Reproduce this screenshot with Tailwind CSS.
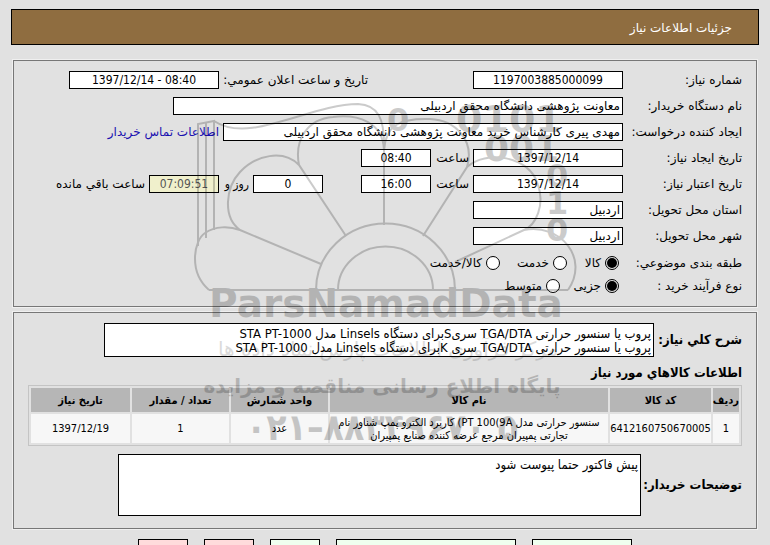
<!DOCTYPE html>
<html lang="fa" dir="rtl">
<head>
    <meta charset="UTF-8">
    <meta name="viewport" content="width=device-width, initial-scale=1.0">
    <title>جزئیات اطلاعات نیاز</title>
    <script src="https://cdn.jsdelivr.net/npm/@tailwindcss/browser@4"></script>
</head>
<body class="relative bg-[#e1e1e1] text-black text-xs font-['DejaVu_Sans',sans-serif]">
    <div class="px-[11px] pt-[9px]">
        <h1 class="h-9 border border-black bg-[#8f6d40] px-[26px] leading-[36px] text-white">جزئیات اطلاعات نیاز</h1>

        <!-- Request details -->
        <section class="mx-0.5 mt-[15px] border border-[#777] px-[14px] pt-[10px] pb-[11px] outline outline-[#f0f0f0]">
            <div class="flex flex-col gap-2">
                <div class="flex h-[18px] items-center">
                    <label for="number" class="w-[119px]">شماره نیاز:</label>
                    <input id="number" value="1197003885000099" dir="ltr" class="h-[18px] w-[150px] border border-black bg-white text-center font-['DejaVu_Sans_Condensed',sans-serif]">
                    <label for="announced" class="ms-[105px] w-[149px] whitespace-nowrap">تاریخ و ساعت اعلان عمومي:</label>
                    <input id="announced" value="1397/12/14 - 08:40" dir="ltr" class="h-[18px] w-[150px] border border-black bg-white text-center font-['DejaVu_Sans_Condensed',sans-serif]">
                </div>
                <div class="flex h-[18px] items-center">
                    <label for="buyer" class="w-[119px]">نام دستگاه خریدار:</label>
                    <input id="buyer" value="معاونت پژوهشی دانشگاه محقق اردبیلی" class="h-[18px] w-[450px] border border-black bg-white px-0.5">
                </div>
                <div class="flex h-[18px] items-center">
                    <label for="creator" class="w-[119px] whitespace-nowrap">ایجاد کننده درخواست:</label>
                    <input id="creator" value="مهدی پیری کارشناس خرید معاونت پژوهشی دانشگاه محقق اردبیلی" class="h-[18px] w-[400px] border border-black bg-white px-0.5">
                    <a href="#" class="ms-1 whitespace-nowrap text-[#1a10b0]">اطلاعات تماس خریدار</a>
                </div>
                <div class="flex h-[18px] items-center">
                    <label for="created" class="w-[119px]">تاریخ ایجاد نیاز:</label>
                    <input id="created" value="1397/12/14" dir="ltr" class="h-[18px] w-[150px] border border-black bg-white text-center font-['DejaVu_Sans_Condensed',sans-serif]">
                    <label for="created-time" class="w-[42px] px-1">ساعت</label>
                    <input id="created-time" value="08:40" dir="ltr" class="h-[18px] w-[70px] border border-black bg-white text-center font-['DejaVu_Sans_Condensed',sans-serif]">
                </div>
                <div class="flex h-[18px] items-center">
                    <label for="expires" class="w-[119px]">تاریخ اعتبار نیاز:</label>
                    <input id="expires" value="1397/12/14" dir="ltr" class="h-[18px] w-[150px] border border-black bg-white text-center font-['DejaVu_Sans_Condensed',sans-serif]">
                    <label for="expires-time" class="w-[42px] px-1">ساعت</label>
                    <input id="expires-time" value="16:00" dir="ltr" class="h-[18px] w-[70px] border border-black bg-white text-center font-['DejaVu_Sans_Condensed',sans-serif]">
                    <input id="days" value="0" class="ms-[38px] h-[18px] w-[70px] border border-black bg-white text-center font-['DejaVu_Sans_Condensed',sans-serif]">
                    <label for="days" class="w-[34px] px-1 whitespace-nowrap font-['DejaVu_Sans_Condensed',sans-serif]">روز و</label>
                    <input id="remaining" value="07:09:51" dir="ltr" class="h-[18px] w-[70px] border border-black bg-[#f0f0cc] text-center text-[#555] font-['DejaVu_Sans_Condensed',sans-serif]">
                    <label for="remaining" class="ms-1">ساعت باقي مانده</label>
                </div>
                <div class="flex h-[18px] items-center">
                    <label for="province" class="w-[119px]">استان محل تحویل:</label>
                    <input id="province" value="اردبیل" class="h-[18px] w-[150px] border border-black bg-white px-0.5">
                </div>
                <div class="flex h-[18px] items-center">
                    <label for="city" class="w-[119px]">شهر محل تحویل:</label>
                    <input id="city" value="اردبیل" class="h-[18px] w-[150px] border border-black bg-white px-0.5">
                </div>
            </div>
            <div role="radiogroup" aria-labelledby="category" class="mt-[9px] flex h-[18px] items-center">
                <span id="category" class="w-[123px]">طبقه بندی موضوعي:</span>
                <label class="flex w-[52px] items-center gap-1"><input type="radio" name="category" checked class="size-[14px] appearance-none rounded-full border border-black bg-white p-px checked:bg-black checked:bg-clip-content">کالا</label>
                <label class="flex w-[67px] items-center gap-1"><input type="radio" name="category" class="size-[14px] appearance-none rounded-full border border-black bg-white">خدمت</label>
                <label class="flex items-center gap-1"><input type="radio" name="category" class="size-[14px] appearance-none rounded-full border border-black bg-white">کالا/خدمت</label>
            </div>
            <div role="radiogroup" aria-labelledby="process" class="mt-[5px] flex h-[18px] items-center">
                <span id="process" class="w-[123px]">نوع فرآیند خرید :</span>
                <label class="flex w-[59px] items-center gap-1"><input type="radio" name="process" checked class="size-[14px] appearance-none rounded-full border border-black bg-white p-px checked:bg-black checked:bg-clip-content">جزیی</label>
                <label class="flex items-center gap-1"><input type="radio" name="process" class="size-[14px] appearance-none rounded-full border border-black bg-white">متوسط</label>
            </div>
        </section>

        <!-- Items -->
        <section class="mx-0.5 mt-[5px] border border-[#777] px-[14px] pt-[10px] pb-3 outline outline-[#f0f0f0] font-['DejaVu_Sans_Condensed',sans-serif]">
            <div class="flex items-center">
                <label for="summary" class="w-[88px] text-[13px] font-bold whitespace-nowrap">شرح كلي نیاز:</label>
                <textarea id="summary" class="h-[34px] w-[550px] resize-none overflow-hidden border border-black bg-white px-0.5 pt-[3px] text-[13px] leading-[14px]">پروب یا سنسور حرارتی TGA/DTA سریSبرای دستگاه Linsels مدل STA PT-1000
پروب یا سنسور حرارتی TGA/DTA سری Kبرای دستگاه Linsels مدل STA PT-1000</textarea>
            </div>
            <h2 class="mt-2 h-5 text-[13px] leading-4 font-bold">اطلاعات کالاهاي مورد نیاز</h2>
            <table class="w-full table-fixed border-separate border-spacing-[2px] border border-[#c4c4c4] text-center text-[11px] leading-[13px]">
                <thead>
                    <tr class="h-6 bg-[#b6b6b6]">
                        <th class="w-[26px]">ردیف</th>
                        <th class="w-[101px]">کد کالا</th>
                        <th>نام کالا</th>
                        <th class="w-[97px]">واحد شمارش</th>
                        <th class="w-[97px]">تعداد / مقدار</th>
                        <th class="w-[99px]">تاریخ نیاز</th>
                    </tr>
                </thead>
                <tbody>
                    <tr class="h-[29px] bg-[#f7f7f7]">
                        <td>1</td>
                        <td>6412160750670005</td>
                        <td>سنسور حرارتی مدل <bdi dir="ltr">PT 100(9A</bdi>) کاربرد الکترو پمپ شناور نام تجارتی پمپیران مرجع عرضه کننده صنایع پمپیران</td>
                        <td>عدد</td>
                        <td>1</td>
                        <td>1397/12/19</td>
                    </tr>
                </tbody>
            </table>
            <div class="mt-2 flex items-center">
                <label for="notes" class="w-[101px] text-[13px] font-bold whitespace-nowrap">توضیحات خریدار:</label>
                <textarea id="notes" class="h-[62px] w-[523px] resize-none border border-black bg-white px-0.5 pt-[3px] text-[13px] leading-[14px]">پیش فاکتور حتما پیوست شود</textarea>
            </div>
        </section>

        <div class="mt-[10px] flex justify-center gap-4">
            <button class="h-10 w-[100px] border border-black bg-[#efffef]">پاسخ به نیاز</button>
            <button class="h-10 w-[180px] border border-black bg-[#efffef]">مشاهده اسناد پیوست</button>
            <button class="h-10 w-[50px] border border-black bg-[#efffef]">چاپ</button>
            <button class="h-10 w-[50px] border border-black bg-[#ffdcdc]">بازگشت</button>
            <button class="h-10 w-[50px] border border-black bg-[#ffdcdc]">خروج</button>
        </div>
    </div>

    <!-- Watermark laid over the form -->
    <svg class="pointer-events-none absolute top-[90px] left-1/2 h-[370px] w-[400px] -translate-x-1/2 opacity-20" viewBox="185 90 400 370" fill="none" stroke="black" stroke-width="2" aria-hidden="true">
        <path d="M209 290H568M316 290A69 66 0 0 1 455 290M338 290A47 43 0 0 1 433 290"/>
        <path d="M209 290C188 272 194 240 205 233C215 226 229 226 240 230L321 264M240 230C222 217 226 187 240 172C256 155 283 149 299 165L346 236M299 165C294 139 308 119 333 117C358 114 383 122 384 150V225M384 150C386 125 400 118 430 119C455 120 475 140 467 167L423 236M467 167C485 150 530 155 538 185C545 205 536 225 524 230L455 262M524 230C560 223 590 258 568 290"/>
        <path d="M198 246V124L214 121V230M206 238V122M214 121C250 145 310 104 358 104C378 105 385 118 384 150"/>
        <g fill="black" stroke="none" direction="ltr" class="font-['DejaVu_Sans'] font-bold">
            <text x="387" y="131" font-size="32">0</text>
            <text x="456" y="132" font-size="38">0101</text>
            <text x="484" y="161" font-size="36">001</text>
            <text x="546" y="187" font-size="32">0</text>
            <text x="546" y="214" font-size="32">1</text>
            <text x="546" y="241" font-size="32">0</text>
            <text x="386" y="317" font-size="39" text-anchor="middle">ParsNamadData</text>
        </g>
        <g fill="black" stroke="none" direction="rtl" text-anchor="middle" class="font-['DejaVu_Sans']">
            <text x="388" y="356" font-size="20" opacity="0.7">مرکز فرآوری اطلاعات پارس نماد داده ها</text>
            <text x="382" y="393" font-size="20" font-weight="bold">پایگاه اطلاع رسانی مناقصه و مزایده</text>
            <text x="382" y="440" font-size="37" font-weight="bold" direction="ltr" class="font-['DejaVu_Sans_Condensed']">۰۲۱–۸۸۳۴۹۶۷۰ ۵</text>
        </g>
    </svg>
</body>
</html>
